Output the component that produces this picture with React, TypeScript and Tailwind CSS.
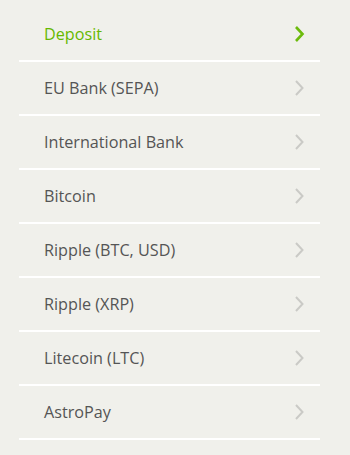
import React from "react";

const items = [
  "EU Bank (SEPA)",
  "International Bank",
  "Bitcoin",
  "Ripple (BTC, USD)",
  "Ripple (XRP)",
  "Litecoin (LTC)",
  "AstroPay",
];

function Chevron({ active }: { active?: boolean }) {
  return (
    <svg width="11" height="18" viewBox="0 0 11 18" className="block">
      <path
        d="M2 2 L8.5 9 L2 16"
        fill="none"
        stroke={active ? "#6cbb0c" : "#cacac6"}
        strokeWidth={active ? 2.6 : 2}
        strokeLinecap="butt"
        strokeLinejoin="miter"
      />
    </svg>
  );
}

export default function App() {
  return (
    <div
      className="w-[350px] h-[455px] bg-[#f0f0eb] pt-[8px]"
      style={{ fontFamily: '"Open Sans", sans-serif' }}
    >
      <div className="ml-[19px] w-[301px]">
        <div className="h-[54px] flex items-center justify-between border-b-2 border-white pl-[25px] pr-[15px]">
          <span className="text-[16.2px] text-[#66b800]">Deposit</span>
          <Chevron active />
        </div>
        {items.map((t) => (
          <div
            key={t}
            className="h-[54px] flex items-center justify-between border-b-2 border-white pl-[25px] pr-[15px]"
          >
            <span className="text-[16.2px] text-[#555555]">{t}</span>
            <Chevron />
          </div>
        ))}
      </div>
    </div>
  );
}
